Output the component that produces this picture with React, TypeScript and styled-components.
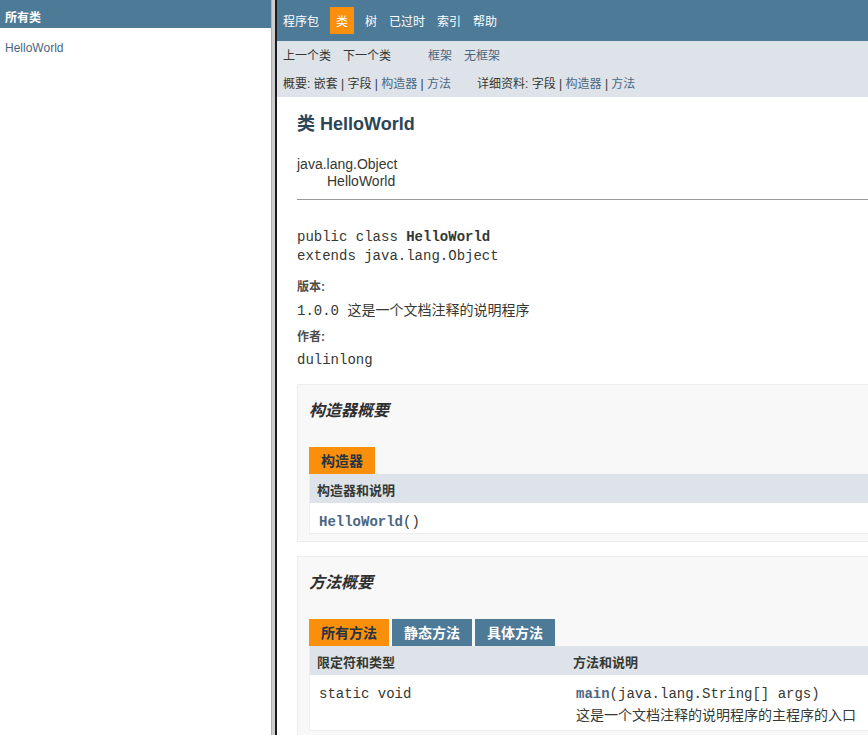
import React from "react";
import styled, { createGlobalStyle } from "styled-components";

const SANS = `"Liberation Sans", "Noto Sans CJK SC", sans-serif`;
const MONO = `"Liberation Mono", "Noto Sans CJK SC", monospace`;
const BLUE = "#4d7a97";
const ORANGE = "#fa8f0c";
const LINK = "#4a6782";
const TEXT = "#353833";

const GlobalStyle = createGlobalStyle`
  html, body { margin: 0; padding: 0; background: #fff; overflow: hidden; }
  body { font-family: ${SANS}; color: ${TEXT}; }
`;

const Frameset = styled.div`
  display: flex;
  width: 868px;
  height: 735px;
  overflow: hidden;
`;

const LeftFrame = styled.nav`
  width: 271px;
  flex: none;
  background: #fff;
`;

const LeftHeader = styled.div`
  box-sizing: border-box;
  height: 28px;
  padding: 4px 5px 0;
  display: flex;
  align-items: center;
  background: ${BLUE};
  color: #fff;
  font-size: 12px;
  font-weight: bold;
`;

const ClassLink = styled.a`
  display: block;
  padding: 12px 5px 10px;
  font-size: 12px;
  line-height: 16px;
  color: ${LINK};
  text-decoration: none;
`;

const Divider = styled.div`
  width: 6px;
  flex: none;
  box-sizing: border-box;
  background: #cdcdcd;
  border-left: 1px solid #b0b0b0;
  border-right: 2px solid #1c1c1c;
`;

const RightFrame = styled.div`
  flex: 1;
  min-width: 0;
  overflow: hidden;
`;

const RightDoc = styled.div`
  width: 1100px;
`;

const TopNav = styled.div`
  height: 41px;
  display: flex;
  align-items: center;
  background: ${BLUE};
  font-size: 12px;
`;

const TopItem = styled.a<{ $active?: boolean }>`
  display: flex;
  align-items: center;
  height: 27px;
  padding: 0 6px;
  margin: ${(p) => (p.$active ? "0 5px" : "0")};
  background: ${(p) => (p.$active ? ORANGE : "transparent")};
  color: #fff;
  text-decoration: none;
`;

const SubNav = styled.div`
  height: 56px;
  background: #dee3e9;
  font-size: 12px;
`;

const SubRow = styled.div<{ $h: number }>`
  height: ${(p) => p.$h}px;
  display: flex;
  align-items: center;
`;

const NavGroup = styled.div<{ $gap?: number }>`
  display: flex;
  align-items: center;
  margin-left: ${(p) => p.$gap ?? 0}px;
`;

const NavItem = styled.span<{ $link?: boolean }>`
  padding: 0 6px;
  color: ${(p) => (p.$link ? LINK : TEXT)};
`;

const InlineLinks = styled.div<{ $gap?: number }>`
  padding-left: 6px;
  margin-left: ${(p) => p.$gap ?? 0}px;
  white-space: pre;
  color: ${TEXT};
`;

const Lnk = styled.a`
  color: ${LINK};
  text-decoration: none;
`;

const Content = styled.main`
  padding: 0 20px;
`;

const Title = styled.h2`
  margin: 0;
  padding-top: 15px;
  font-size: 18px;
  line-height: 25px;
  font-weight: bold;
  color: #2c4557;
`;

const Inheritance = styled.div`
  margin-top: 19px;
  font-size: 14px;
  line-height: 17px;
  color: ${TEXT};
`;

const Inherited = styled.div`
  margin-left: 30px;
`;

const Rule = styled.hr`
  margin: 9px 0 0;
  border: 0;
  border-top: 1px solid #9a9a9a;
  height: 0;
`;

const Signature = styled.pre`
  margin: 28px 0 0;
  font-family: ${MONO};
  font-size: 14px;
  line-height: 19px;
  color: ${TEXT};
`;

const Term = styled.div<{ $mt: number }>`
  margin-top: ${(p) => p.$mt}px;
  font-size: 12px;
  line-height: 17px;
  font-weight: bold;
  color: #4e4e4e;
`;

const Desc = styled.div<{ $mt: number }>`
  margin-top: ${(p) => p.$mt}px;
  font-family: ${MONO};
  font-size: 14px;
  line-height: 19px;
  color: ${TEXT};
`;

const SummaryBox = styled.section<{ $mt: number }>`
  margin-top: ${(p) => p.$mt}px;
  padding: 0 20px 7px 11px;
  background: #f8f8f8;
  border: 1px solid #ededed;
`;

const SummaryTitle = styled.h3`
  margin: 15px 0 0;
  font-size: 16px;
  line-height: 22px;
  font-style: italic;
  font-weight: bold;
  color: #2f2f2f;
`;

const Tabs = styled.div`
  margin-top: 25px;
  display: flex;
  gap: 3px;
`;

const Tab = styled.span<{ $active?: boolean }>`
  height: 27px;
  padding: 0 12px;
  font-size: 14px;
  line-height: 28px;
  font-weight: bold;
  background: ${(p) => (p.$active ? ORANGE : BLUE)};
  color: ${(p) => (p.$active ? "#253441" : "#fff")};
`;

const Table = styled.div<{ $cols: string }>`
  display: grid;
  grid-template-columns: ${(p) => p.$cols};
  border: 1px solid #eee;
  border-top: 0;
`;

const Th = styled.div`
  padding: 8px 3px 3px 7px;
  font-size: 13px;
  line-height: 18px;
  font-weight: bold;
  background: #dee3e9;
  color: ${TEXT};
`;

const Td = styled.div`
  padding: 10px 3px 1px 9px;
  background: #fff;
  font-family: ${MONO};
  font-size: 14px;
  line-height: 19px;
  color: ${TEXT};
`;

const TdWide = styled(Td)`
  padding-left: 10px;
`;

const CodeLink = styled.a`
  font-weight: bold;
  color: ${LINK};
  text-decoration: none;
`;

const Block = styled.div`
  margin: 1px 0 4px;
  font-family: ${SANS};
  font-size: 14px;
  line-height: 20px;
  color: ${TEXT};
`;

export default function App() {
  return (
    <>
      <GlobalStyle />
      <Frameset>
        <LeftFrame>
          <LeftHeader>所有类</LeftHeader>
          <ClassLink href="#">HelloWorld</ClassLink>
        </LeftFrame>
        <Divider />
        <RightFrame>
          <RightDoc>
            <TopNav>
              <TopItem href="#">程序包</TopItem>
              <TopItem $active>类</TopItem>
              <TopItem href="#">树</TopItem>
              <TopItem href="#">已过时</TopItem>
              <TopItem href="#">索引</TopItem>
              <TopItem href="#">帮助</TopItem>
            </TopNav>
            <SubNav>
              <SubRow $h={27}>
                <NavGroup>
                  <NavItem>上一个类</NavItem>
                  <NavItem>下一个类</NavItem>
                </NavGroup>
                <NavGroup $gap={25}>
                  <NavItem $link>框架</NavItem>
                  <NavItem $link>无框架</NavItem>
                </NavGroup>
              </SubRow>
              <SubRow $h={28}>
                <InlineLinks>
                  概要: 嵌套 | 字段 | <Lnk href="#">构造器</Lnk> | <Lnk href="#">方法</Lnk>
                </InlineLinks>
                <InlineLinks $gap={20}>
                  详细资料: 字段 | <Lnk href="#">构造器</Lnk> | <Lnk href="#">方法</Lnk>
                </InlineLinks>
              </SubRow>
            </SubNav>
            <Content>
              <Title>类 HelloWorld</Title>
              <Inheritance>
                <div>java.lang.Object</div>
                <Inherited>HelloWorld</Inherited>
              </Inheritance>
              <Rule />
              <Signature>
                public class <b>HelloWorld</b>
                {"\n"}extends java.lang.Object
              </Signature>
              <Term $mt={13}>版本:</Term>
              <Desc $mt={6}>1.0.0 这是一个文档注释的说明程序</Desc>
              <Term $mt={8}>作者:</Term>
              <Desc $mt={5}>dulinlong</Desc>

              <SummaryBox $mt={14}>
                <SummaryTitle>构造器概要</SummaryTitle>
                <Tabs>
                  <Tab $active>构造器</Tab>
                </Tabs>
                <Table $cols="1fr">
                  <Th>构造器和说明</Th>
                  <Td>
                    <CodeLink href="#">HelloWorld</CodeLink>()
                  </Td>
                </Table>
              </SummaryBox>

              <SummaryBox $mt={14}>
                <SummaryTitle>方法概要</SummaryTitle>
                <Tabs>
                  <Tab $active>所有方法</Tab>
                  <Tab>静态方法</Tab>
                  <Tab>具体方法</Tab>
                </Tabs>
                <Table $cols="256px 1fr">
                  <Th>限定符和类型</Th>
                  <Th>方法和说明</Th>
                  <Td>static void</Td>
                  <TdWide>
                    <CodeLink href="#">main</CodeLink>(java.lang.String[] args)
                    <Block>这是一个文档注释的说明程序的主程序的入口</Block>
                  </TdWide>
                </Table>
              </SummaryBox>
            </Content>
          </RightDoc>
        </RightFrame>
      </Frameset>
    </>
  );
}
